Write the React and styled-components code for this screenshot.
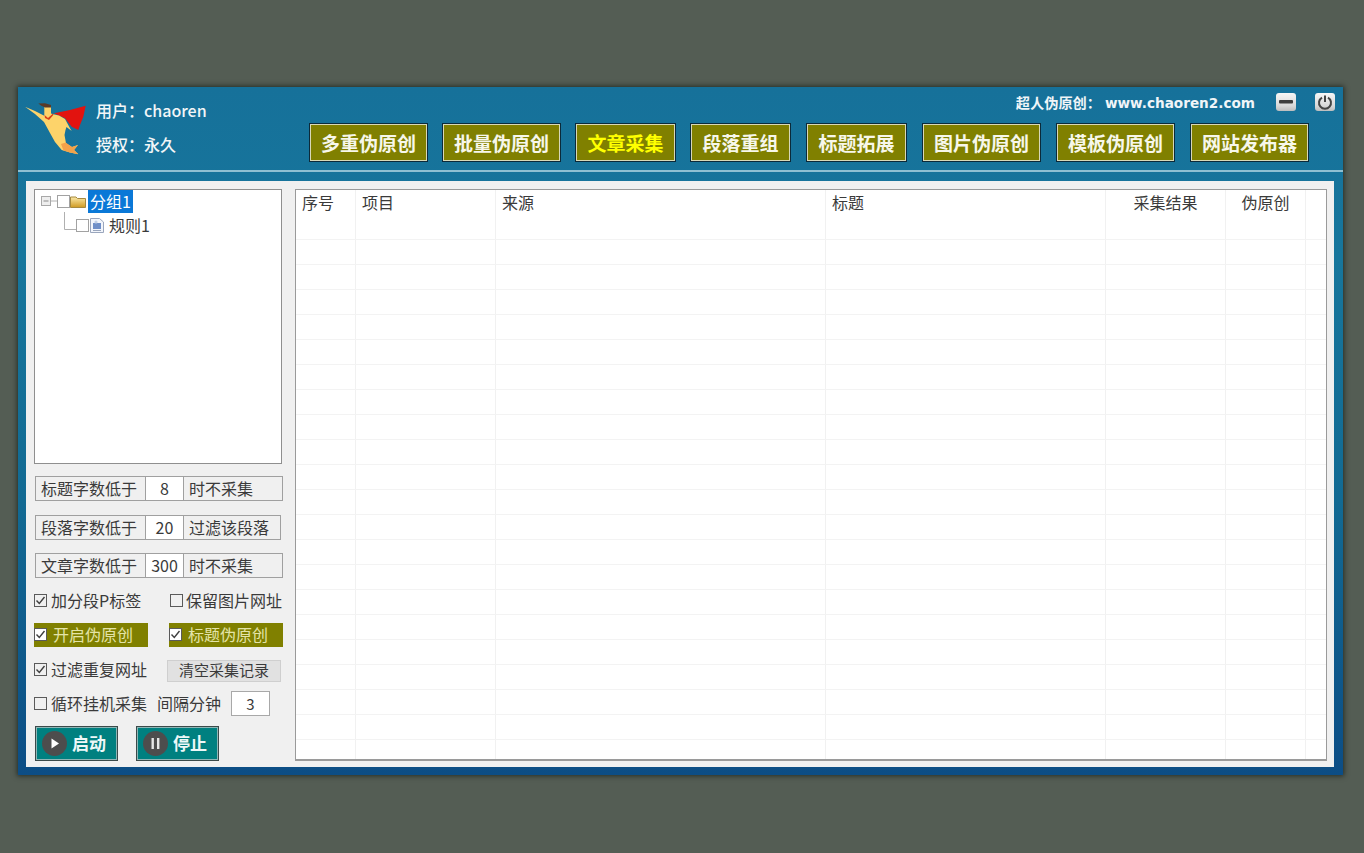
import React from "react";
import styled, { createGlobalStyle } from "styled-components";

const FONT = `"Noto Sans CJK SC", "Noto Sans", sans-serif`;

const Global = createGlobalStyle`
  html, body { margin: 0; padding: 0; background: #545d54; }
  body { font-family: ${FONT}; color: #3a3a3a; }
  * { box-sizing: border-box; }
`;

const Page = styled.div`
  width: 1364px;
  height: 853px;
  padding: 87px 21px 0 18px;
  background: #545d54;
`;
const Window = styled.div`
  width: 1325px;
  height: 688px;
  display: flex;
  flex-direction: column;
  background: linear-gradient(180deg, #16719a 0%, #17769c 25%, #126a93 60%, #0c4d85 100%);
  box-shadow: 0 0 5px 1px rgba(20, 28, 24, 0.75);
`;
const Header = styled.header`
  height: 85px;
  flex: none;
  display: flex;
  justify-content: space-between;
  border-bottom: 2px solid #8fc0d2;
`;
const Brand = styled.div`
  display: flex;
  padding: 13px 0 0 7px;
`;
const Logo = styled.svg`
  width: 62px;
  height: 58px;
  flex: none;
`;
const UserInfo = styled.div`
  margin-left: 9px;
  display: flex;
  flex-direction: column;
  gap: 13px;
  color: #f2f6f8;
  font-size: 16px;
  font-weight: 500;
  line-height: 21px;
`;
const HeaderRight = styled.div`
  display: flex;
  flex-direction: column;
  align-items: flex-end;
  padding: 6px 8px 0 0;
`;
const TopRow = styled.div`
  height: 18px;
  display: flex;
  align-items: center;
`;
const SiteText = styled.span`
  color: #f0f5f8;
  font-size: 14.2px;
  font-weight: 700;
  margin-right: 21px;
  white-space: nowrap;
`;
const SiteUrl = styled.span`
  font-family: "DejaVu Sans", sans-serif;
  font-size: 13.6px;
  margin-left: 4px;
`;
const WinButton = styled.button`
  width: 20px;
  height: 18px;
  padding: 0;
  border: 0;
  border-radius: 3px;
  background: linear-gradient(180deg, #f6f6f6 0%, #d9d9d9 70%, #bdbdbd 100%);
  display: flex;
  align-items: center;
  justify-content: center;
  margin-left: ${(p) => p.$gap || 0}px;
`;
const Nav = styled.nav`
  margin: 12px 26px 0 0;
  display: flex;
  gap: 14px;
`;
const NavButton = styled.button`
  width: ${(p) => p.$w}px;
  height: 39px;
  padding: 0;
  background: #808000;
  border: 1px solid #0b2a3a;
  box-shadow: inset 0 0 0 1px #d8d8b8;
  color: ${(p) => (p.$active ? "#ffff00" : "#f7f7ea")};
  font-family: ${FONT};
  font-size: 19px;
  font-weight: 700;
  &:nth-child(n + 5) { margin-left: 1px; }
`;
const Body = styled.div`
  flex: 1;
  min-height: 0;
  margin: 9px 9px 8px 8px;
  background: #f0f0f0;
  padding: 8px 8px 6px 8px;
  display: flex;
  gap: 13px;
`;
const Side = styled.aside`
  width: 248px;
  flex: none;
  display: flex;
  flex-direction: column;
`;
const Tree = styled.div`
  width: 248px;
  height: 275px;
  background: #fff;
  border: 1px solid #8f8f8f;
  padding: 0 0 0 6px;
  flex: none;
`;
const TreeRow = styled.div`
  display: flex;
  align-items: center;
  height: ${(p) => p.$h}px;
  padding-left: ${(p) => p.$indent || 0}px;
`;
const TreeGlyph = styled.svg`
  flex: none;
  display: block;
`;
const Selected = styled.span`
  margin-left: 2px;
  background: #0a78d7;
  color: #fff;
  font-size: 16px;
  line-height: 22px;
  height: 23px;
  padding: 0 2px;
  width: 45px;
  white-space: nowrap;
`;
const TreeLabel = styled.span`
  margin-left: 5px;
  font-size: 16px;
  line-height: 22px;
  color: #3a3a3a;
`;
const Limit = styled.div`
  width: ${(p) => p.$w || 248}px;
  height: 25px;
  margin: ${(p) => p.$mt}px 0 0 1px;
  display: flex;
  border: 1px solid #a0a0a0;
  background: #f0f0f0;
  flex: none;
`;
const LimitLabel = styled.span`
  width: 109px;
  flex: none;
  font-size: 16px;
  line-height: 22px;
  padding-left: 5px;
  white-space: nowrap;
`;
const LimitValue = styled.span`
  width: 39px;
  flex: none;
  background: #fff;
  border-left: 1px solid #a0a0a0;
  border-right: 1px solid #a0a0a0;
  font-size: 16px;
  line-height: 22px;
  text-align: center;
`;
const LimitSuffix = styled.span`
  padding-left: 5px;
  font-size: 16px;
  line-height: 22px;
  white-space: nowrap;
`;
const OptionRow = styled.div`
  display: flex;
  align-items: center;
  height: ${(p) => p.$h || 24}px;
  margin-top: ${(p) => p.$mt || 0}px;
  flex: none;
`;
const Check = styled.label`
  display: flex;
  align-items: center;
  width: ${(p) => p.$w}px;
  height: 100%;
  flex: none;
  font-size: 16px;
  line-height: 22px;
  white-space: nowrap;
  padding-bottom: ${(p) => p.$lift || 0}px;
  color: ${(p) => (p.$olive ? "#e4e4a8" : "#3a3a3a")};
  background: ${(p) => (p.$olive ? "#808000" : "transparent")};
  margin-right: ${(p) => p.$mr || 0}px;
`;
const Box = styled.span`
  width: 13px;
  height: 13px;
  flex: none;
  display: flex;
  align-items: center;
  justify-content: center;
  border: 1px solid ${(p) => (p.$soft ? "#a2a2a2" : "#5a5a5a")};
  background: ${(p) => (p.$fill ? "#fff" : "transparent")};
  margin-right: ${(p) => p.$mr ?? 4}px;
`;
const ClearButton = styled.button`
  width: 114px;
  height: 22px;
  padding: 0 0 2px;
  background: #e1e1e1;
  border: 1px solid #cfcfcf;
  color: #3a3a3a;
  font-family: ${FONT};
  font-size: 15px;
  line-height: 18px;
`;
const PlainLabel = styled.span`
  font-size: 16px;
  line-height: 22px;
  padding-bottom: 2px;
  margin-left: ${(p) => p.$ml}px;
  white-space: nowrap;
`;
const IntervalInput = styled.span`
  width: 39px;
  height: 25px;
  margin-left: 10px;
  background: #fff;
  border: 1px solid #a8a8a8;
  text-align: center;
  font-size: 15px;
  line-height: 24px;
`;
const Actions = styled.div`
  display: flex;
  gap: 18px;
  margin: 10px 0 0 1px;
`;
const ActionButton = styled.button`
  width: 83px;
  height: 35px;
  padding: 0 0 0 6px;
  display: flex;
  align-items: center;
  gap: 5px;
  background: #008080;
  border: 1px solid #3b4a4a;
  box-shadow: inset 0 0 0 1px #8fb6b6;
  color: #eef8f8;
  font-family: ${FONT};
  font-size: 17px;
  font-weight: 700;
`;
const ActionLabel = styled.span`
  padding-bottom: 2px;
`;
const PlayDisc = styled.svg`
  width: 25px;
  height: 25px;
  flex: none;
`;
const Grid = styled.main`
  width: 1032px;
  height: 572px;
  background: #fff;
  border: 1px solid #9a9a9a;
  border-bottom-width: 2px;
  flex: none;
  overflow: hidden;
`;
const Row = styled.div`
  display: grid;
  grid-template-columns: 60px 140px 330px 280px 120px 80px 1fr;
  height: ${(p) => p.$h}px;
  border-bottom: 1px solid #f3f3f3;
`;
const Cell = styled.div`
  border-right: 1px solid #f1f1f1;
  font-size: 16px;
  line-height: 24px;
  color: #3a3a3a;
  padding-left: ${(p) => (p.$center ? 0 : 6)}px;
  text-align: ${(p) => (p.$center ? "center" : "left")};
  &:last-child { border-right: 0; }
`;

const navItems = [
  ["多重伪原创", 119],
  ["批量伪原创", 119],
  ["文章采集", 101, true],
  ["段落重组", 101],
  ["标题拓展", 101],
  ["图片伪原创", 119],
  ["模板伪原创", 119],
  ["网站发布器", 119],
];
const columns = [
  ["序号"],
  ["项目"],
  ["来源"],
  ["标题"],
  ["采集结果", true],
  ["伪原创", true],
  [""],
];

const Tick = () => (
  <svg width="11" height="11" viewBox="0 0 11 11">
    <path d="M1.5 5.5 L4.3 8.5 L9.5 2" fill="none" stroke="#3f3f3f" strokeWidth="1.4" />
  </svg>
);
const CheckBox = ({ checked, fill, mr, soft }) => (
  <Box $fill={fill} $mr={mr} $soft={soft}>
    {checked && <Tick />}
  </Box>
);

const SupermanLogo = () => (
  <Logo viewBox="0 0 62 58">
    <path d="M29 13.3 L45 10 L60.7 5.7 L58.3 16.7 L55 25 L53.3 30 L46.7 26.7 L40 18.3 Z" fill="#e2130f" />
    <path d="M0 6.7 L10 11 L19.3 15.7 L19.3 7 L26 7 L26 13.5 L28.3 14.3 L34 15.5 L40 19 L45 28.3 L46.7 31 L41.5 27 L40.5 30 L39.5 35 L41 43.3 L47 47 L53 45 L49 50 L53.3 54.3 L45 52.5 L36.7 50 L30 42 L25 33 L19 22 L10 14 Z" fill="#fdd36a" />
    <path d="M36 44 L40.7 42.5 L47 47 L53 45 L49 50 L53.3 54.3 L45 52.5 L38.5 50.5 Z" fill="#f3a24a" />
    <path d="M13.3 3.5 L20 3.3 L26 5 L26 7.5 L20 7.5 L16 5.5 Z" fill="#5a3a28" />
    <path d="M19.5 15 L23 18 L28.3 13.3 L28.3 15 L24 20 L20 18 Z" fill="#d8401a" />
  </Logo>
);

const Expander = () => (
  <TreeGlyph width="16" height="11" viewBox="0 0 16 11">
    <rect x="0.5" y="0.5" width="9" height="9" fill="#eee" stroke="#a8a8a8" />
    <path d="M2.5 5 H7.5" stroke="#8a8a8a" />
    <path d="M10 5 H16" stroke="#b0b0b0" />
  </TreeGlyph>
);
const Folder = () => (
  <TreeGlyph width="16" height="13" viewBox="0 0 16 13">
    <defs>
      <linearGradient id="folderFill" x1="0" y1="0" x2="0" y2="1">
        <stop offset="0" stopColor="#fbe9a8" />
        <stop offset="1" stopColor="#cf9a22" />
      </linearGradient>
    </defs>
    <path d="M0.5 2 H6 L7.5 3.5 H15.5 V12.5 H0.5 Z" fill="url(#folderFill)" stroke="#a5893f" />
  </TreeGlyph>
);
const Elbow = () => (
  <TreeGlyph width="12" height="26" viewBox="0 0 12 26">
    <path d="M0.5 0 V17.5 H12" fill="none" stroke="#b0b0b0" />
  </TreeGlyph>
);
const DocIcon = () => (
  <TreeGlyph width="14" height="15" viewBox="0 0 14 15">
    <path d="M0.5 0.5 H9.5 L13.5 4 V14.5 H0.5 Z" fill="#f2f5fb" stroke="#9aa6bd" />
    <rect x="3" y="5" width="8" height="6" fill="#6f8fc8" />
    <circle cx="6" cy="4" r="1.6" fill="#c0cfe6" />
    <path d="M3 12.5 H11" stroke="#9aa6bd" />
  </TreeGlyph>
);

const App = () => (
  <Page>
    <Global />
    <Window>
      <Header>
        <Brand>
          <SupermanLogo />
          <UserInfo>
            <span>用户：chaoren</span>
            <span>授权：永久</span>
          </UserInfo>
        </Brand>
        <HeaderRight>
          <TopRow>
            <SiteText>
              超人伪原创：<SiteUrl>www.chaoren2.com</SiteUrl>
            </SiteText>
            <WinButton aria-label="最小化">
              <svg width="14" height="4" viewBox="0 0 14 4">
                <rect width="14" height="3.4" rx="1" fill="#3d3d3d" />
              </svg>
            </WinButton>
            <WinButton aria-label="关闭" $gap={19}>
              <svg width="16" height="16" viewBox="0 0 16 16">
                <path d="M5 3.6 A6 6 0 1 0 11 3.6" fill="none" stroke="#444" strokeWidth="2" />
                <path d="M8 1.5 V8" stroke="#444" strokeWidth="2" />
              </svg>
            </WinButton>
          </TopRow>
          <Nav>
            {navItems.map(([label, w, active]) => (
              <NavButton key={label} $w={w} $active={active}>
                {label}
              </NavButton>
            ))}
          </Nav>
        </HeaderRight>
      </Header>
      <Body>
        <Side>
          <Tree>
            <TreeRow $h={23}>
              <Expander />
              <CheckBox mr={0} soft />
              <Folder />
              <Selected>分组1</Selected>
            </TreeRow>
            <TreeRow $h={24} $indent={23}>
              <Elbow />
              <CheckBox mr={1} soft />
              <DocIcon />
              <TreeLabel>规则1</TreeLabel>
            </TreeRow>
          </Tree>
          <Limit $mt={12}>
            <LimitLabel>标题字数低于</LimitLabel>
            <LimitValue>8</LimitValue>
            <LimitSuffix>时不采集</LimitSuffix>
          </Limit>
          <Limit $mt={14} $w={246}>
            <LimitLabel>段落字数低于</LimitLabel>
            <LimitValue>20</LimitValue>
            <LimitSuffix>过滤该段落</LimitSuffix>
          </Limit>
          <Limit $mt={13}>
            <LimitLabel>文章字数低于</LimitLabel>
            <LimitValue>300</LimitValue>
            <LimitSuffix>时不采集</LimitSuffix>
          </Limit>
          <OptionRow $mt={10}>
            <Check $w={136}>
              <CheckBox checked />
              加分段P标签
            </Check>
            <Check $w={113}>
              <CheckBox mr={3} />
              保留图片网址
            </Check>
          </OptionRow>
          <OptionRow $mt={11}>
            <Check $w={114} $olive $mr={21} $lift={2}>
              <CheckBox checked fill mr={6} />
              开启伪原创
            </Check>
            <Check $w={114} $olive $lift={2}>
              <CheckBox checked fill mr={6} />
              标题伪原创
            </Check>
          </OptionRow>
          <OptionRow $mt={12} $h={24}>
            <Check $w={133} $lift={4}>
              <CheckBox checked />
              过滤重复网址
            </Check>
            <ClearButton>清空采集记录</ClearButton>
          </OptionRow>
          <OptionRow $mt={8} $h={25}>
            <CheckBox />
            <PlainLabel $ml={0}>循环挂机采集</PlainLabel>
            <PlainLabel $ml={10}>间隔分钟</PlainLabel>
            <IntervalInput>3</IntervalInput>
          </OptionRow>
          <Actions>
            <ActionButton>
              <PlayDisc viewBox="0 0 25 25">
                <circle cx="12.5" cy="12.5" r="12.5" fill="#4d4d4d" />
                <path d="M9.5 7.5 L17 12.5 L9.5 17.5 Z" fill="#fff" />
              </PlayDisc>
              <ActionLabel>启动</ActionLabel>
            </ActionButton>
            <ActionButton>
              <PlayDisc viewBox="0 0 25 25">
                <circle cx="12.5" cy="12.5" r="12.5" fill="#4d4d4d" />
                <rect x="8.5" y="7" width="2.4" height="11" fill="#e6e6e6" />
                <rect x="14" y="7" width="2.4" height="11" fill="#e6e6e6" />
              </PlayDisc>
              <ActionLabel>停止</ActionLabel>
            </ActionButton>
          </Actions>
        </Side>
        <Grid>
          <Row $h={50}>
            {columns.map(([label, center], i) => (
              <Cell key={i} $center={center}>
                {label}
              </Cell>
            ))}
          </Row>
          {Array.from({ length: 21 }, (_, r) => (
            <Row key={r} $h={25}>
              {columns.map((_, i) => (
                <Cell key={i} />
              ))}
            </Row>
          ))}
        </Grid>
      </Body>
    </Window>
  </Page>
);

export default App;
